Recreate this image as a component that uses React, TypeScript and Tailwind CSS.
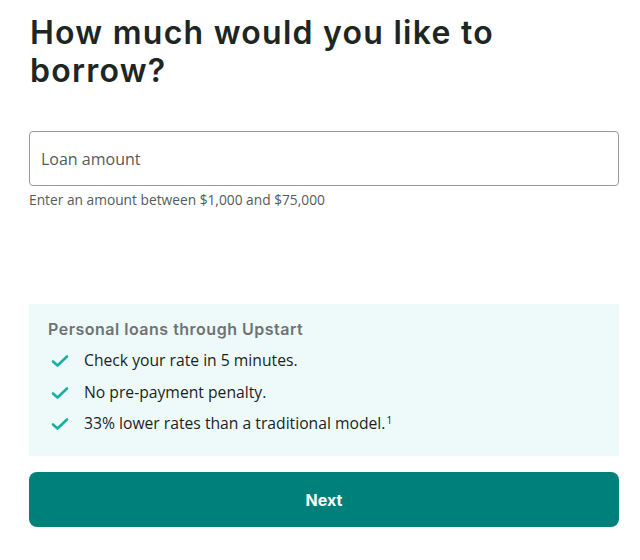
import React from "react";

function Check() {
  return (
    <svg width="18" height="14" viewBox="0 0 18 14" fill="none" className="shrink-0">
      <path d="M2 7.5 L6.5 11.5 L16 2.5" stroke="#16b1a5" strokeWidth="2.6" strokeLinecap="round" strokeLinejoin="round" />
    </svg>
  );
}

export default function App() {
  const items = [
    { t: "Check your rate in 5 minutes.", sup: false },
    { t: "No pre-payment penalty.", sup: false },
    { t: "33% lower rates than a traditional model.", sup: true },
  ];
  return (
    <div className="w-[640px] h-[560px] bg-white pl-[29px] pr-[21px] pt-[14px]" style={{ fontFamily: '"Open Sans", sans-serif' }}>
      <h1
        className="text-[32px] leading-[38px] font-semibold text-[#1e2624] tracking-[1.25px] pl-[1px]"
        style={{ fontFamily: 'Inter, sans-serif' }}
      >
        How much would you like to
        <br />
        borrow?
      </h1>
      <div className="mt-[41px] h-[55px] w-full rounded-[4px] border border-[#9a9a9a] flex items-center px-[11px]">
        <span className="text-[16px] text-[#555b5a]">Loan amount</span>
      </div>
      <div className="mt-[4px] text-[13.75px] text-[#555b5a] leading-[20px]">Enter an amount between $1,000 and $75,000</div>
      <div className="mt-[94px] bg-[#eefafa] h-[152px] pl-[19px] pt-[14px]">
        <div className="text-[16px] font-semibold text-[#6f7372] leading-[22px] tracking-[0.5px]" style={{ fontFamily: 'Inter, sans-serif' }}>
          Personal loans through Upstart
        </div>
        <div className="mt-[9px] flex flex-col gap-[7.5px]">
          {items.map((it) => (
            <div key={it.t} className="flex items-center gap-[15px] h-[24px] pl-[3px]">
              <Check />
              <span className="text-[15.7px] text-[#1b1f1e]">
                {it.t}
                {it.sup && <sup className="text-[10px] ml-[1px]">1</sup>}
              </span>
            </div>
          ))}
        </div>
      </div>
      <button className="mt-[16px] w-full h-[55px] rounded-[8px] bg-[#00807a] text-white text-[16px] font-bold" style={{ fontFamily: 'Inter, sans-serif' }}>
        Next
      </button>
    </div>
  );
}
